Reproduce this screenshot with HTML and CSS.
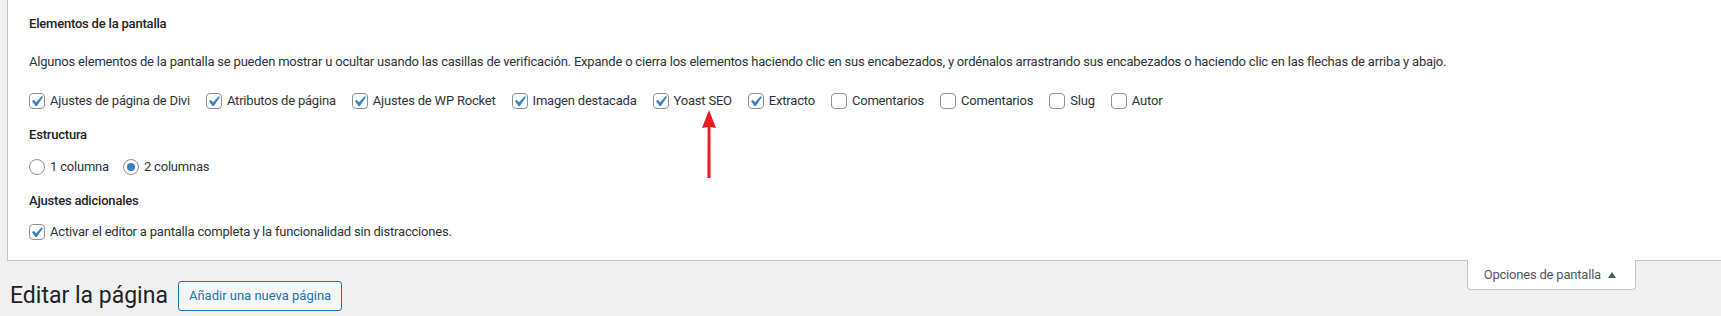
FILE: index.html
```html
<!DOCTYPE html>
<html lang="es">
<head>
    <meta charset="UTF-8">
    <title>Editar la página</title>
    <link rel="stylesheet" href="styles.css">
</head>
<body>

<div id="screen-meta">
    <div class="prefs-group">
        <h5 class="prefs-title first">Elementos de la pantalla</h5>
        <p class="prefs-desc">Algunos elementos de la pantalla se pueden mostrar u ocultar usando las casillas de verificación. Expande o cierra los elementos haciendo clic en sus encabezados, y ordénalos arrastrando sus encabezados o haciendo clic en las flechas de arriba y abajo.</p>
        <div class="opt-row">
            <label class="opt"><span class="box on"></span>Ajustes de página de Divi</label>
            <label class="opt"><span class="box on"></span>Atributos de página</label>
            <label class="opt"><span class="box on"></span>Ajustes de WP Rocket</label>
            <label class="opt"><span class="box on"></span>Imagen destacada</label>
            <label class="opt"><span class="box on"></span>Yoast SEO</label>
            <label class="opt"><span class="box on"></span>Extracto</label>
            <label class="opt"><span class="box"></span>Comentarios</label>
            <label class="opt"><span class="box"></span>Comentarios</label>
            <label class="opt"><span class="box"></span>Slug</label>
            <label class="opt"><span class="box"></span>Autor</label>
        </div>
    </div>

    <div class="prefs-group">
        <h5 class="prefs-title">Estructura</h5>
        <div class="opt-row radios">
            <label class="opt"><span class="radio"></span>1 columna</label>
            <label class="opt"><span class="radio on"></span>2 columnas</label>
        </div>
    </div>

    <div class="prefs-group">
        <h5 class="prefs-title">Ajustes adicionales</h5>
        <div class="opt-row last">
            <label class="opt"><span class="box on"></span>Activar el editor a pantalla completa y la funcionalidad sin distracciones.</label>
        </div>
    </div>
</div>

<div id="screen-meta-links">
    <button class="meta-tab">Opciones de pantalla <span class="caret"></span></button>
</div>

<div class="wrap">
    <h1>Editar la página</h1>
    <a class="title-action" href="#">Añadir una nueva página</a>
</div>

<!-- red annotation arrow pointing at "Yoast SEO" -->
<svg class="annot-arrow" width="20" height="70" viewBox="0 0 20 70">
    <path d="M10 0 L17 18 L11.4 17 L11.6 68 L8.4 68 L8.6 17 L3 18 Z" fill="#ed1c24"/>
</svg>

<script>
    const check = '<svg width="16" height="16" viewBox="0 0 16 16"><rect x=".5" y=".5" width="15" height="15" rx="3.5" fill="#fff" stroke="#8c8f94"/>'
      + '<path transform="translate(-3 -2) scale(1.05)" d="M14.83 4.89l1.34.94-5.81 8.38H9.02L5.78 9.67l1.34-1.25 2.57 2.4z" fill="#3582c4"/></svg>';
    const empty = '<svg width="16" height="16" viewBox="0 0 16 16"><rect x=".5" y=".5" width="15" height="15" rx="3.5" fill="#fff" stroke="#8c8f94"/></svg>';
    const radioOn = '<svg width="16" height="16" viewBox="0 0 16 16"><circle cx="8" cy="8" r="7.5" fill="#fff" stroke="#8c8f94"/><circle cx="8" cy="8" r="4" fill="#3582c4"/></svg>';
    const radioOff = '<svg width="16" height="16" viewBox="0 0 16 16"><circle cx="8" cy="8" r="7.5" fill="#fff" stroke="#8c8f94"/></svg>';

    document.querySelectorAll('.box').forEach(el => {
      el.innerHTML = el.classList.contains('on') ? check : empty;
    });
    document.querySelectorAll('.radio').forEach(el => {
      el.innerHTML = el.classList.contains('on') ? radioOn : radioOff;
    });
</script>

</body>
</html>
```

FILE: styles.css
```css
body {
  margin: 0;
  background: #f0f0f1;
  color: #1d2327;
  font-family: Roboto, "Noto Sans", sans-serif;
  font-size: 13px;
  letter-spacing: -0.2px;
  position: relative;
}

#screen-meta {
  margin-left: 7px;
  background: #fff;
  border-left: 1px solid #c3c4c7;
  border-bottom: 1px solid #c3c4c7;
  padding: 14px 20px 13px 21px;
}

.prefs-title {
  margin: 0;
  font-size: 13px;
  font-weight: 500;
  line-height: 20px;
}

.prefs-desc {
  margin: 18px 0 0;
  line-height: 20px;
  color: #2c3338;
}

.prefs-group + .prefs-group .prefs-title { margin-top: 9px; }

.opt-row {
  display: flex;
  flex-wrap: wrap;
  column-gap: 16px;
  margin-top: 14px;
  line-height: 30px;
}

.opt-row.radios { column-gap: 14px; margin-top: 7px; }
.opt-row.last { margin-top: 6px; }

.opt {
  display: flex;
  align-items: center;
  gap: 5px;
  color: #2c3338;
}

.box, .radio {
  display: flex;
  width: 16px;
  height: 16px;
}

#screen-meta-links {
  float: right;
  margin-right: 85px;
}

.meta-tab {
  display: flex;
  align-items: center;
  gap: 7px;
  height: 30px;
  margin-top: -1px;
  padding: 0 19px 0 16px;
  background: #fff;
  border: 1px solid #c3c4c7;
  border-top: none;
  border-radius: 0 0 4px 4px;
  font-family: inherit;
  font-size: 13px;
  letter-spacing: inherit;
  color: #50575e;
}

.caret {
  width: 0;
  height: 0;
  border-left: 4px solid transparent;
  border-right: 4px solid transparent;
  border-bottom: 6px solid #50575e;
}

.wrap {
  display: flex;
  align-items: center;
  gap: 10px;
  padding: 20px 0 0 10px;
}

.wrap h1 {
  margin: 0;
  font-size: 23px;
  font-weight: 400;
  line-height: 30px;
  letter-spacing: 0;
}

.title-action {
  padding: 0 10px;
  height: 28px;
  line-height: 28px;
  border: 1px solid #2271b1;
  border-radius: 3px;
  background: #f6f7f7;
  color: #2271b1;
  font-size: 13px;
  letter-spacing: 0;
  text-decoration: none;
}

.annot-arrow {
  position: absolute;
  left: 699px;
  top: 110px;
}
```
